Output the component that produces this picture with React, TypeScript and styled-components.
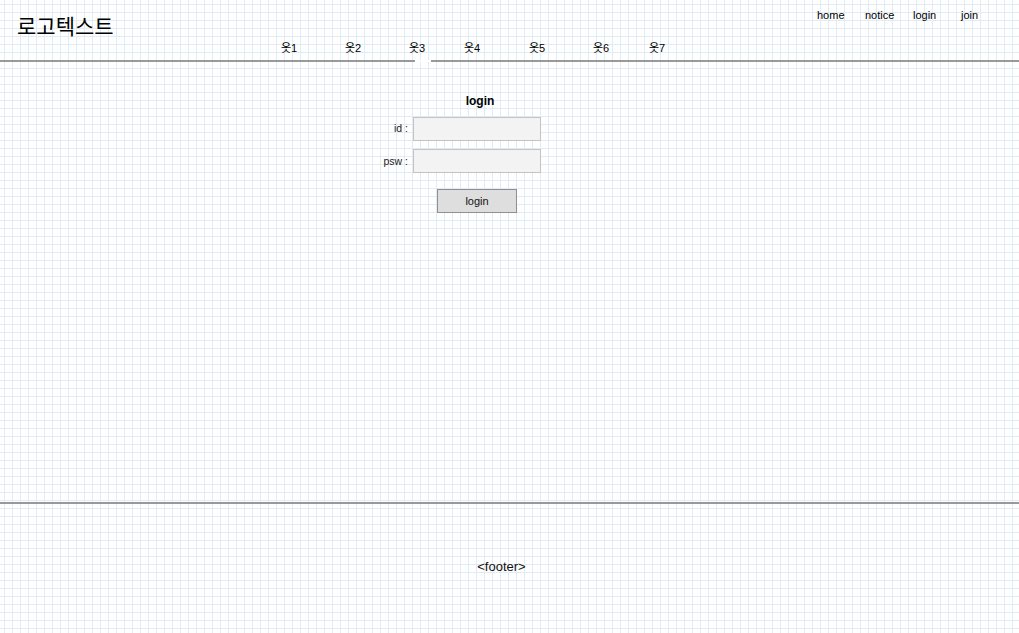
import React from 'react';
import styled, { createGlobalStyle } from 'styled-components';

const GlobalStyle = createGlobalStyle`
  html, body {
    margin: 0;
    padding: 0;
    height: 100%;
  }
  body {
    font-family: 'Liberation Sans', 'Noto Sans CJK KR', sans-serif;
    color: #111;
    background-color: #ffffff;
    background-image:
      linear-gradient(to right, #e0ecf5 1px, transparent 1px),
      linear-gradient(to bottom, #e0ecf5 1px, transparent 1px);
    background-size: 8px 8px;
    background-position: 4px 4px;
  }
`;

const Page = styled.div`
  display: flex;
  flex-direction: column;
  min-height: 633px;
`;

const Header = styled.header`
  height: 60px;
  border-bottom: 2px solid #999999;
  display: flex;
  flex-direction: column;
`;

const TopBar = styled.div`
  height: 36px;
  display: flex;
  justify-content: space-between;
  align-items: flex-start;
`;

const Logo = styled.div`
  margin: 14px 0 0 17px;
  font-family: 'Noto Sans CJK KR', sans-serif;
  font-size: 21px;
  line-height: 23px;
  color: #000;
`;

const UtilNav = styled.nav`
  display: flex;
  margin: 8px 10px 0 0;
`;

const UtilLink = styled.a`
  width: 48px;
  font-size: 11px;
  line-height: 14px;
  color: #000;
  text-decoration: none;
`;

const CatNav = styled.nav`
  display: flex;
  margin-left: 281px;
  height: 24px;
  align-items: center;
`;

const CatItem = styled.a<{ $w: number; $active?: boolean }>`
  position: relative;
  width: ${(p) => p.$w}px;
  font-size: 11px;
  line-height: 14px;
  color: #000;
  text-decoration: none;

  &::after {
    content: '';
    display: ${(p) => (p.$active ? 'block' : 'none')};
    position: absolute;
    left: 6px;
    bottom: -7px;
    width: 16px;
    height: 2px;
    background: #ffffff;
  }
`;

const Main = styled.main`
  height: 440px;
  padding-top: 31px;
  box-sizing: border-box;
`;

const LoginForm = styled.form`
  margin-left: 365px;
  width: 176px;
  display: flex;
  flex-direction: column;
`;

const Title = styled.h3`
  margin: 0 0 8px 51px;
  width: 128px;
  text-align: center;
  font-size: 12px;
  line-height: 16px;
  font-weight: bold;
  color: #000;
`;

const Row = styled.label`
  display: grid;
  grid-template-columns: 48px 128px;
  align-items: center;
  margin-bottom: 8px;
`;

const LabelText = styled.span<{ $lift?: number }>`
  text-align: right;
  padding-right: 5px;
  font-size: 10.5px;
  color: #222;
  margin-top: ${(p) => -(p.$lift ?? 0)}px;
`;

const Input = styled.input`
  box-sizing: border-box;
  width: 128px;
  height: 24px;
  border: 1px solid #c3c3c3;
  background: #f3f3f3;
  padding: 0 4px;
  outline: none;
`;

const SubmitButton = styled.button`
  margin: 8px 0 0 72px;
  box-sizing: border-box;
  width: 80px;
  height: 24px;
  border: 1px solid #8f8f8f;
  background: #dedede;
  font-family: 'Liberation Sans', sans-serif;
  font-size: 11px;
  color: #111;
  padding: 0;
`;

const Footer = styled.footer`
  border-top: 2px solid #999999;
  height: 129px;
  display: flex;
  justify-content: center;
  padding: 55px 16px 0 0;
  box-sizing: border-box;
  font-size: 13px;
  line-height: 16px;
  color: #111;
`;

const cats = [
  { label: '옷1', w: 64 },
  { label: '옷2', w: 64 },
  { label: '옷3', w: 55, active: true },
  { label: '옷4', w: 65 },
  { label: '옷5', w: 64 },
  { label: '옷6', w: 56 },
  { label: '옷7', w: 40 },
];

const utils = ['home', 'notice', 'login', 'join'];

export default function App() {
  return (
    <>
      <GlobalStyle />
      <Page>
        <Header>
          <TopBar>
            <Logo>로고텍스트</Logo>
            <UtilNav>
              {utils.map((u) => (
                <UtilLink key={u} href="#">
                  {u}
                </UtilLink>
              ))}
            </UtilNav>
          </TopBar>
          <CatNav>
            {cats.map((c) => (
              <CatItem key={c.label} href="#" $w={c.w} $active={c.active}>
                {c.label}
              </CatItem>
            ))}
          </CatNav>
        </Header>

        <Main>
          <LoginForm onSubmit={(e) => e.preventDefault()}>
            <Title>login</Title>
            <Row>
              <LabelText $lift={3}>id :</LabelText>
              <Input type="text" />
            </Row>
            <Row>
              <LabelText>psw :</LabelText>
              <Input type="password" />
            </Row>
            <SubmitButton type="submit">login</SubmitButton>
          </LoginForm>
        </Main>

        <Footer>&lt;footer&gt;</Footer>
      </Page>
    </>
  );
}
